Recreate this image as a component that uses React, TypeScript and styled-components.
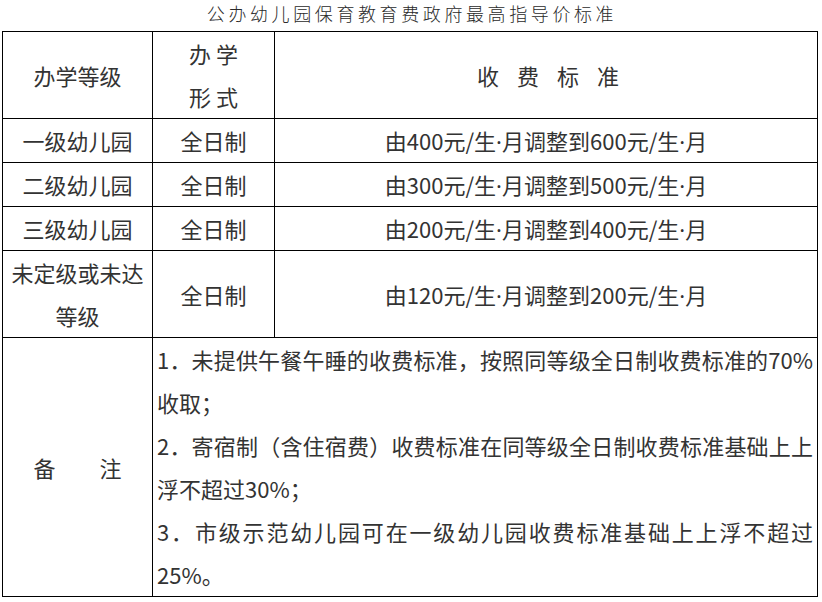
import React from 'react';
import styled, { createGlobalStyle } from 'styled-components';

const GlobalStyle = createGlobalStyle`
  html, body {
    margin: 0;
    padding: 0;
    background: #fff;
  }
  body {
    font-family: "Noto Sans CJK SC", "Noto Sans", sans-serif;
    color: #333;
  }
`;

const Page = styled.div`
  width: 822px;
  padding-left: 2px;
  box-sizing: border-box;
`;

const Title = styled.h1`
  margin: 0;
  height: 31px;
  line-height: 27px;
  text-align: center;
  font-size: 18px;
  font-weight: 300;
  letter-spacing: 3.6px;
  color: #2a2a2a;
`;

const Table = styled.table`
  width: 815px;
  border-collapse: collapse;
  table-layout: fixed;
  font-size: 22px;
  line-height: 43px;
  color: #333;
`;

const Cell = styled.td<{ $align?: 'center' | 'justify'; $indent?: number }>`
  border: 1px solid #000;
  height: 43px;
  padding: ${(p) => (p.$align === 'justify' ? '0 4px' : '0')};
  padding-left: ${(p) => (p.$indent ? `${p.$indent}px` : undefined)};
  text-align: ${(p) => p.$align ?? 'center'};
  text-align-last: ${(p) => (p.$align === 'justify' ? 'left' : 'auto')};
  vertical-align: middle;
  white-space: normal;
  word-break: normal;
`;

const Spaced = styled.span<{ $gap: number }>`
  letter-spacing: ${(p) => p.$gap}px;
`;

// the middle dot is narrow in the original, so take it from a Latin face
const Dot = styled.span`
  font-family: "Noto Sans", "Liberation Sans", sans-serif;
  line-height: 0;
`;

const Note = styled.p`
  margin: 0;
  text-align: justify;
`;

const rows = [
  { level: '一级幼儿园', from: '400', to: '600' },
  { level: '二级幼儿园', from: '300', to: '500' },
  { level: '三级幼儿园', from: '200', to: '400' },
  { level: '未定级或未达等级', from: '120', to: '200' },
];

const notes = [
  '1．未提供午餐午睡的收费标准，按照同等级全日制收费标准的70%收取；',
  '2．寄宿制（含住宿费）收费标准在同等级全日制收费标准基础上上浮不超过30%；',
  '3．市级示范幼儿园可在一级幼儿园收费标准基础上上浮不超过25%。',
];

const PerMonth = () => (
  <>
    元/生<Dot>·</Dot>月
  </>
);

export default function App() {
  return (
    <Page>
      <GlobalStyle />
      <Title>公办幼儿园保育教育费政府最高指导价标准</Title>
      <Table>
        <colgroup>
          <col style={{ width: 150 }} />
          <col style={{ width: 122 }} />
          <col style={{ width: 543 }} />
        </colgroup>
        <tbody>
          <tr>
            <Cell>办学等级</Cell>
            <Cell>
              办 学<br />形 式
            </Cell>
            <Cell $indent={22}>
              <Spaced $gap={18}>收费标准</Spaced>
            </Cell>
          </tr>
          {rows.map((r) => (
            <tr key={r.level}>
              <Cell>{r.level}</Cell>
              <Cell>全日制</Cell>
              <Cell>
                由{r.from}
                <PerMonth />
                调整到{r.to}
                <PerMonth />
              </Cell>
            </tr>
          ))}
          <tr>
            <Cell>备　　注</Cell>
            <Cell colSpan={2} $align="justify">
              {notes.map((n) => (
                <Note key={n}>{n}</Note>
              ))}
            </Cell>
          </tr>
        </tbody>
      </Table>
    </Page>
  );
}
